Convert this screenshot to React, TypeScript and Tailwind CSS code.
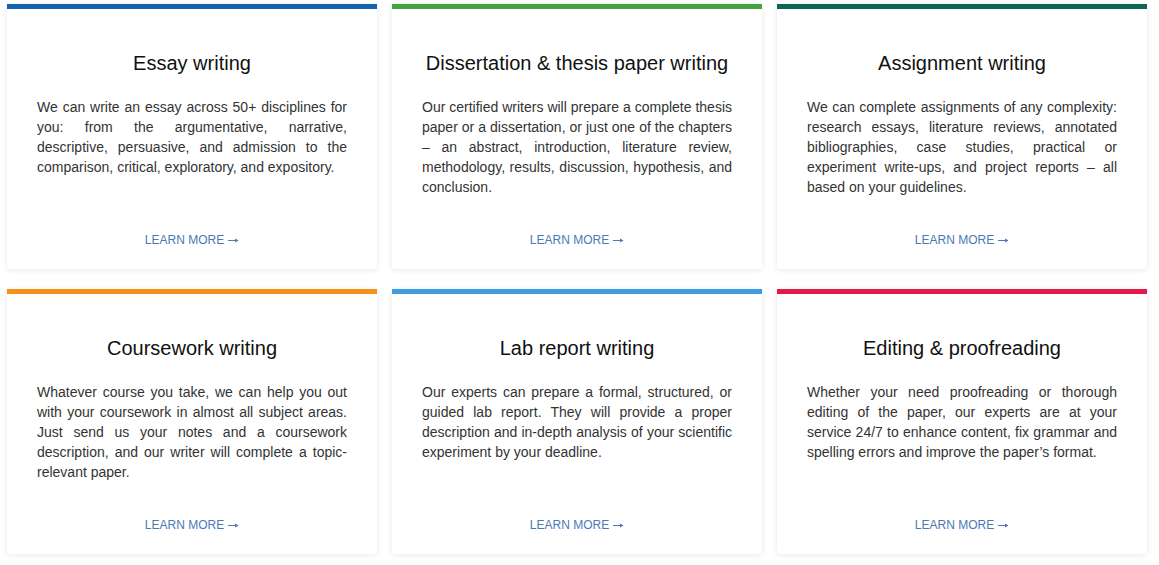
type Service = {
  title: string;
  body: string;
  bar: string;
};

const services: Service[] = [
  {
    title: "Essay writing",
    body: "We can write an essay across 50+ disciplines for you: from the argumentative, narrative, descriptive, persuasive, and admission to the comparison, critical, exploratory, and expository.",
    bar: "border-[#1262ad]",
  },
  {
    title: "Dissertation & thesis paper writing",
    body: "Our certified writers will prepare a complete thesis paper or a dissertation, or just one of the chapters – an abstract, introduction, literature review, methodology, results, discussion, hypothesis, and conclusion.",
    bar: "border-[#43a340]",
  },
  {
    title: "Assignment writing",
    body: "We can complete assignments of any complexity: research essays, literature reviews, annotated bibliographies, case studies, practical or experiment write-ups, and project reports – all based on your guidelines.",
    bar: "border-[#0d6757]",
  },
  {
    title: "Coursework writing",
    body: "Whatever course you take, we can help you out with your coursework in almost all subject areas. Just send us your notes and a coursework description, and our writer will complete a topic-relevant paper.",
    bar: "border-[#f5901a]",
  },
  {
    title: "Lab report writing",
    body: "Our experts can prepare a formal, structured, or guided lab report. They will provide a proper description and in-depth analysis of your scientific experiment by your deadline.",
    bar: "border-[#3f9ce0]",
  },
  {
    title: "Editing & proofreading",
    body: "Whether your need proofreading or thorough editing of the paper, our experts are at your service 24/7 to enhance content, fix grammar and spelling errors and improve the paper’s format.",
    bar: "border-[#e2194b]",
  },
];

function Arrow() {
  return (
    <svg width="11" height="7" viewBox="0 0 11 7" className="ml-[4px] inline-block align-middle">
      <path d="M0 3.5H10" stroke="currentColor" strokeWidth="1" />
      <path d="M7 1.5L10.5 3.5L7 5.5Z" fill="currentColor" />
    </svg>
  );
}

function ServiceCard({ title, body, bar }: Service) {
  return (
    <div
      className={`flex h-[265px] flex-col rounded-b-[3px] border-t-[5px] bg-white shadow-[0_1px_6px_rgba(0,0,0,0.09)] ${bar}`}
    >
      <h3 className="pt-[42px] text-center text-[20px] leading-[24px] font-normal text-[#111]">
        {title}
      </h3>
      <p className="mt-[22px] px-[30px] text-justify text-[14px] leading-[20px] text-[#333]">
        {body}
      </p>
      <a
        href="#"
        className="mt-auto mb-[21px] flex items-center justify-center text-[12px] leading-[16px] text-[#4a79b6]"
      >
        LEARN MORE
        <Arrow />
      </a>
    </div>
  );
}

export default function App() {
  return (
    <div className="min-h-[565px] bg-white pt-[4px] pl-[7px] font-['Liberation_Sans',Arial,sans-serif]">
      <div className="grid grid-cols-[repeat(3,370px)] gap-x-[15px] gap-y-[20px]">
        {services.map((s) => (
          <ServiceCard key={s.title} {...s} />
        ))}
      </div>
    </div>
  );
}
